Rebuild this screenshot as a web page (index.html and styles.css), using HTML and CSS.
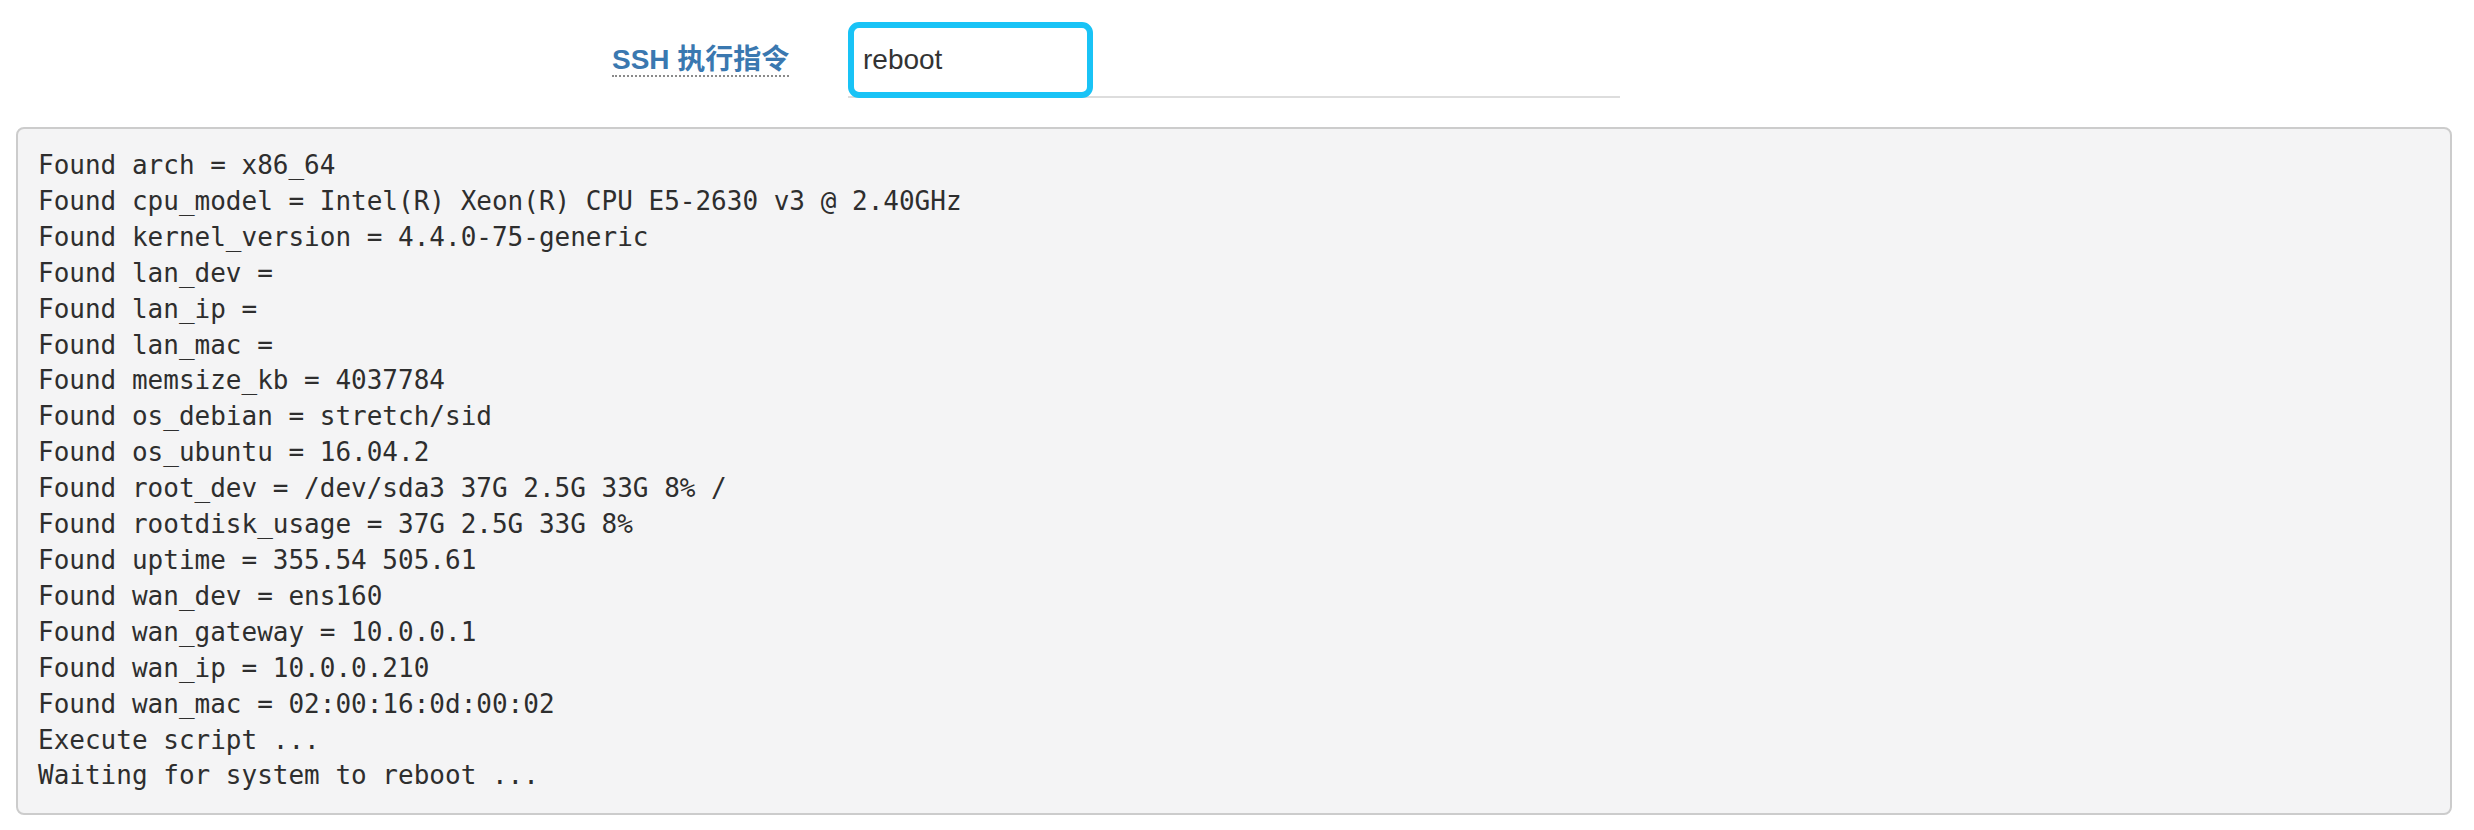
FILE: index.html
```html
<!DOCTYPE html>
<html lang="zh-CN">
<head>
<meta charset="utf-8">
<title>SSH 执行指令</title>
<link rel="stylesheet" href="styles.css">
</head>
<body>
<div class="page">
  <div class="form-row">
    <label class="field-label" for="cmd"><span class="abbr">SSH 执行指令</span></label>
    <div class="field">
      <input id="cmd" class="cmd-input" type="text" value="reboot">
    </div>
  </div>
<pre class="output">Found arch = x86_64
Found cpu_model = Intel(R) Xeon(R) CPU E5-2630 v3 @ 2.40GHz
Found kernel_version = 4.4.0-75-generic
Found lan_dev =
Found lan_ip =
Found lan_mac =
Found memsize_kb = 4037784
Found os_debian = stretch/sid
Found os_ubuntu = 16.04.2
Found root_dev = /dev/sda3 37G 2.5G 33G 8% /
Found rootdisk_usage = 37G 2.5G 33G 8%
Found uptime = 355.54 505.61
Found wan_dev = ens160
Found wan_gateway = 10.0.0.1
Found wan_ip = 10.0.0.210
Found wan_mac = 02:00:16:0d:00:02
Execute script ...
Waiting for system to reboot ...</pre>
</div>
</body>
</html>
```

FILE: styles.css
```css
html, body {
  margin: 0;
  padding: 0;
  background: #ffffff;
}

.page {
  padding: 22px 22px 0 16px;
  font-family: "Liberation Sans", Arial, "Noto Sans CJK SC", sans-serif;
  color: #333333;
}

.form-row {
  display: flex;
  align-items: flex-start;
  padding-left: 596px;
}

.field-label {
  display: block;
  width: 236px;
  margin-top: 23px;
  font-size: 28px;
  font-weight: bold;
  line-height: 30px;
  color: #3a78b0;
}

.abbr {
  display: inline-block;
  border-bottom: 2px dotted #8a8a8a;
}

.field {
  width: 772px;
  height: 74px;
  border-bottom: 2px solid #dddddd;
}

.cmd-input {
  display: block;
  box-sizing: border-box;
  width: 245px;
  height: 76px;
  margin: 0 0 -2px 0;
  padding: 0 0 0 9px;
  border: 6px solid #19c3f6;
  border-radius: 11px;
  background: #ffffff;
  outline: none;
  font-family: "Liberation Sans", Arial, sans-serif;
  font-size: 28px;
  color: #333333;
}

.output {
  box-sizing: border-box;
  width: 2436px;
  margin: 29px 0 0 0;
  padding: 19px 20px;
  background: #f4f4f5;
  border: 2px solid #cccccc;
  border-radius: 8px;
  font-family: "DejaVu Sans Mono", Menlo, monospace;
  font-size: 26px;
  line-height: 35.9px;
  color: #2e2e2e;
  white-space: pre;
}
```
